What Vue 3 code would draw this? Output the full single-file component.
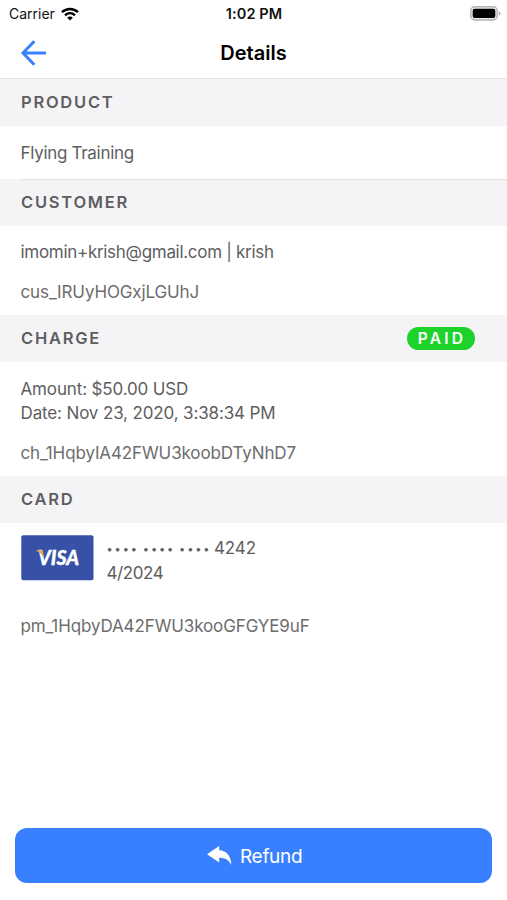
<script setup>
const customer = ['imomin+krish@gmail.com | krish', 'cus_IRUyHOGxjLGUhJ']
</script>

<template>
  <main class="screen">
    <div class="status">
      <div class="carrier">
        <span class="carrier-name">Carrier</span>
        <svg class="wifi" width="18" height="14" viewBox="0 0 18 14" fill="none" stroke="#000">
          <path d="M1 5.200C5.500.8 12.500.8 17 5.200" stroke-width="2.500" />
          <path d="M4 8.300C6.900 5.500 11.100 5.500 14 8.300" stroke-width="2.300" />
          <path d="M9 13.500 6.200 10.700C7.800 9.200 10.200 9.200 11.800 10.700Z" fill="#000" stroke="none" />
        </svg>
      </div>
      <span class="time">1:02 PM</span>
      <svg class="battery" width="31" height="15" viewBox="0 0 31 15">
        <rect x=".8" y=".8" width="26.400" height="13.200" rx="4" fill="#e8e8e8" stroke="#b4b4b4" stroke-width="1.400" />
        <rect x="2.700" y="2.700" width="22.600" height="9.400" rx="2" fill="#000" />
        <path d="M28.800 5.200C31 6 31 8.800 28.800 9.600Z" fill="#aaa" />
      </svg>
    </div>

    <header class="nav">
      <svg class="back" width="26" height="26" viewBox="0 0 26 26" fill="none" stroke="#3880ff" stroke-width="3">
        <path d="M14.300 1.300 3 13 14.300 24.700M3 13H26" />
      </svg>
      <h1>Details</h1>
    </header>

    <h2 class="heading"><span>PRODUCT</span></h2>
    <section class="product"><p class="name">Flying Training</p></section>

    <h2 class="heading divided"><span>CUSTOMER</span></h2>
    <section class="customer">
      <p class="email">{{ customer[0] }}</p>
      <p class="id">{{ customer[1] }}</p>
    </section>

    <h2 class="heading"><span>CHARGE</span><span class="badge">PAID</span></h2>
    <section class="charge">
      <p>Amount: $50.00 USD</p>
      <p>Date: Nov 23, 2020, 3:38:34 PM</p>
      <p class="id">ch_1HqbyIA42FWU3koobDTyNhD7</p>
    </section>

    <h2 class="heading"><span>CARD</span></h2>
    <section class="card">
      <div class="card-row">
        <svg class="visa" width="73" height="46" viewBox="0 0 73 46">
          <rect x=".3" y=".3" width="72.200" height="45" rx="2" fill="#3651a5" />
          <text x="17" y="30" textLength="41" lengthAdjust="spacingAndGlyphs">VISA</text>
          <path d="M15.300 15.200H19.500Q21.200 15.200 21.600 17L22.500 22.500Q20.200 17.300 15.300 15.900Z" fill="#e9a24b" />
        </svg>
        <div>
          <p class="number"><span class="dots"><span>••••</span><span>••••</span><span>••••</span></span><span>4242</span></p>
          <p class="expiry">4/2024</p>
        </div>
      </div>
      <p class="id">pm_1HqbyDA42FWU3kooGFGYE9uF</p>
    </section>

    <button class="refund" type="button">
      <svg width="25" height="20" viewBox="0 0 25 20">
        <path d="M0 8.200 12.200 0V4.300C19.500 4.700 23.800 9.500 24.300 19C21.500 13.500 18 11.900 12.200 11.800V16.400Z" fill="#fff" />
      </svg>
      <span>Refund</span>
    </button>
  </main>
</template>

<style>
body {
  margin: 0;
  background: #fff;
}
</style>

<style scoped>
.screen {
  box-sizing: border-box;
  display: flex;
  flex-direction: column;
  width: 507px;
  height: 900px;
  padding-bottom: 17px;
  background: #fff;
  color: #5e5e5f;
  font-family: Inter, "Liberation Sans", sans-serif;
  font-size: 17px;
  line-height: 24.500px;
}
p, h1, h2 {
  margin: 0;
}
p {
  letter-spacing: -.14px;
  white-space: nowrap;
}
.status {
  display: grid;
  grid-template-columns: 1fr auto 1fr;
  align-items: center;
  height: 27px;
  padding: 0 6px 0 9px;
  color: #111;
  font-size: 14px;
}
.carrier {
  display: flex;
  align-items: center;
  gap: 6px;
}
.carrier-name {
  padding-top: 1px;
}
.time {
  padding: 1px 2px 0 0;
  font-size: 14.500px;
  font-weight: 600;
  letter-spacing: .1px;
}
.battery {
  justify-self: end;
}
.nav {
  display: grid;
  grid-template-columns: 1fr auto 1fr;
  align-items: center;
  height: 51px;
  padding: 0 20px;
  border-bottom: 1px solid #e4e4e6;
}
h1 {
  padding-top: 1px;
  color: #000;
  font-size: 20px;
  font-weight: 600;
}
.heading {
  box-sizing: border-box;
  display: flex;
  align-items: center;
  justify-content: space-between;
  flex: none;
  height: 47px;
  padding: 0 32px 0 21px;
  background: #f4f4f7;
  font-size: 16.500px;
  font-weight: 600;
  letter-spacing: 1.750px;
}
.divided {
  background: linear-gradient(#e2e2e5, #e2e2e5) 21px 0 / 100% 1px no-repeat #f4f4f7;
}
.badge {
  box-sizing: border-box;
  width: 68px;
  height: 23px;
  padding-left: 2px;
  border-radius: 12px;
  background: #1dd32b;
  color: #fff;
  font-size: 15.500px;
  line-height: 23px;
  letter-spacing: 3.200px;
  text-align: center;
}
section {
  box-sizing: border-box;
  flex: none;
  padding: 15px 21px 0 20.500px;
}
.name, .email {
  letter-spacing: -.3px;
}
.id {
  margin-top: 15.500px;
  color: #6d6d6e;
  letter-spacing: -.12px;
}
.product {
  height: 53px;
}
.customer {
  height: 89px;
  padding-top: 14px;
}
.charge {
  height: 114px;
  padding-top: 14.500px;
}
.card {
  padding-top: 12px;
}
.card-row {
  display: flex;
  gap: 13px;
}
.card-row p {
  padding-top: 1px;
}
.card-row .expiry {
  padding-top: 0;
  letter-spacing: -.4px;
}
.visa {
  flex: none;
}
.visa text {
  fill: #fff;
  stroke: #fff;
  stroke-width: .4px;
  font-family: Lato, sans-serif;
  font-size: 20px;
  font-style: italic;
  font-weight: 900;
}
.number {
  display: flex;
}
.dots {
  display: flex;
  width: 107.500px;
  padding-top: 1px;
  margin-bottom: -1px;
  font-size: 11px;
  letter-spacing: 1.900px;
}
.dots span {
  flex: none;
  width: 36.300px;
}
.card .id {
  margin-top: 28.500px;
}
.refund {
  display: flex;
  align-items: center;
  justify-content: center;
  gap: 7.500px;
  width: 477px;
  height: 55px;
  margin: auto auto 0 15.400px;
  padding: 0 0 0 2px;
  border: 0;
  border-radius: 12px;
  background: #3880ff;
  color: #fff;
  font: 400 19px/24px Inter, sans-serif;
  letter-spacing: -.3px;
}
.refund span {
  padding-top: 2px;
}
</style>
